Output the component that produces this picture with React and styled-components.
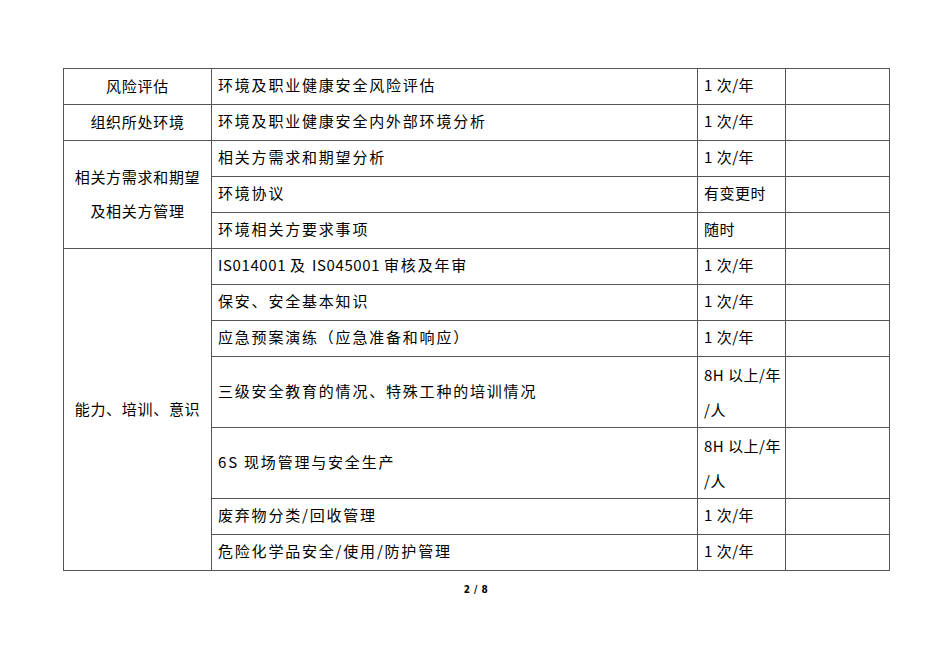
import React from "react";
import styled, { createGlobalStyle } from "styled-components";

const GlobalStyle = createGlobalStyle`
  html, body {
    margin: 0;
    padding: 0;
    background: #fff;
  }
  body {
    font-family: "Noto Sans CJK SC", "Noto Sans", sans-serif;
    color: #000;
  }
`;

const Page = styled.div`
  width: 950px;
  height: 672px;
  padding: 68px 0 0 63px;
  box-sizing: border-box;
  overflow: hidden;
`;

const Table = styled.table`
  border-collapse: collapse;
  table-layout: fixed;
  width: 826px;
  border: 1px solid #333;
`;

const Col = styled.col`
  width: ${(p) => p.$w}px;
`;

const Cell = styled.td`
  border: 1px solid #555;
  height: ${(p) => (p.$tall ? 70 : 35)}px;
  padding: 0 6px 3px;
  box-sizing: border-box;
  font-size: 15px;
  line-height: 32px;
  letter-spacing: 1.8px;
  text-align: left;
  vertical-align: middle;
  white-space: nowrap;
  overflow: hidden;
`;

const GroupCell = styled(Cell)`
  padding: 0 0 1px;
  line-height: 34px;
  letter-spacing: 0.7px;
  text-align: center;
`;

const Freq = styled(Cell)`
  letter-spacing: 0.5px;
  padding-bottom: ${(p) => (p.$tall ? 0 : 3)}px;
  line-height: ${(p) => (p.$tall ? 35 : 32)}px;
  vertical-align: ${(p) => (p.$tall ? "top" : "middle")};
`;

const Latin = styled.span`
  letter-spacing: 0.6px;
`;

const PageNo = styled.div`
  width: 826px;
  margin-top: 13px;
  text-align: center;
  font-family: "DejaVu Sans Condensed", "DejaVu Sans", sans-serif;
  font-weight: bold;
  font-size: 10px;
  letter-spacing: 0.5px;
`;

const rows = [
  { group: "风险评估", span: 1, item: "环境及职业健康安全风险评估", freq: "1 次/年" },
  { group: "组织所处环境", span: 1, item: "环境及职业健康安全内外部环境分析", freq: "1 次/年" },
  { group: ["相关方需求和期望", "及相关方管理"], span: 3, item: "相关方需求和期望分析", freq: "1 次/年" },
  { item: "环境协议", freq: "有变更时" },
  { item: "环境相关方要求事项", freq: "随时" },
  {
    group: "能力、培训、意识",
    span: 8,
    item: (
      <>
        <Latin>IS014001 </Latin>及 <Latin>IS045001 </Latin>审核及年审
      </>
    ),
    freq: "1 次/年",
  },
  { item: "保安、安全基本知识", freq: "1 次/年" },
  { item: "应急预案演练（应急准备和响应）", freq: "1 次/年" },
  { item: "三级安全教育的情况、特殊工种的培训情况", freq: ["8H 以上/年", "/人"], tall: true },
  { item: "6S 现场管理与安全生产", freq: ["8H 以上/年", "/人"], tall: true },
  { item: "废弃物分类/回收管理", freq: "1 次/年" },
  { item: "危险化学品安全/使用/防护管理", freq: "1 次/年" },
];

const lines = (v) =>
  Array.isArray(v)
    ? v.map((t, i) => (
        <React.Fragment key={i}>
          {i > 0 && <br />}
          {t}
        </React.Fragment>
      ))
    : v;

export default function App() {
  return (
    <>
      <GlobalStyle />
      <Page>
        <Table>
          <colgroup>
            <Col $w={148} />
            <Col $w={486} />
            <Col $w={88} />
            <Col $w={104} />
          </colgroup>
          <tbody>
            {rows.map((r, i) => (
              <tr key={i}>
                {r.group && <GroupCell rowSpan={r.span}>{lines(r.group)}</GroupCell>}
                <Cell $tall={r.tall}>{r.item}</Cell>
                <Freq $tall={r.tall}>{lines(r.freq)}</Freq>
                <Cell $tall={r.tall} />
              </tr>
            ))}
          </tbody>
        </Table>
        <PageNo>2 / 8</PageNo>
      </Page>
    </>
  );
}
